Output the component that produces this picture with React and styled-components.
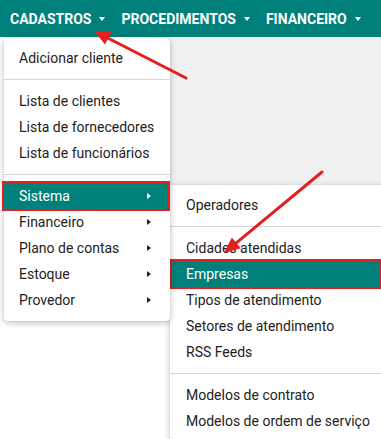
import React from "react";
import styled, { createGlobalStyle } from "styled-components";

const Global = createGlobalStyle`
  html, body {
    margin: 0;
    padding: 0;
    background: #ffffff;
    font-family: Roboto, "Liberation Sans", sans-serif;
  }
`;

const TEAL = "#00807a";
const RED = "#e3201f";

const Page = styled.div`
  position: relative;
  width: 381px;
  height: 439px;
  overflow: hidden;
  background: #fff;
`;

const Navbar = styled.nav`
  display: flex;
  align-items: center;
  height: 37px;
  background: ${TEAL};
  padding-left: 10px;
  gap: 16px;
`;

const NavItem = styled.div`
  position: relative;
  display: flex;
  align-items: center;
  gap: 8px;
  color: #fff;
  font-weight: 700;
  font-size: 14px;
  white-space: nowrap;
`;

const DownCaret = styled.span`
  width: 0;
  height: 0;
  border-left: 3.5px solid transparent;
  border-right: 3.5px solid transparent;
  border-top: 4px solid #fff;
  margin-top: 1px;
`;

const Content = styled.div`
  display: flex;
  padding-left: 150px;
`;

const GrayPanel = styled.div`
  flex: 1;
  height: 160px;
  background: #f0f0f0;
`;

const Menu = styled.div`
  position: absolute;
  top: ${(p) => p.$top}px;
  left: ${(p) => p.$left}px;
  width: ${(p) => p.$width}px;
  background: #fff;
  border-radius: 0 4px 4px 4px;
  box-shadow: 0 2px 6px rgba(0, 0, 0, 0.25), 0 0 1px rgba(0, 0, 0, 0.2);
  padding: 7px 0 8px;
  z-index: ${(p) => p.$z || 10};
`;

const Item = styled.div`
  position: relative;
  display: flex;
  align-items: center;
  justify-content: space-between;
  height: 26px;
  box-sizing: border-box;
  padding: 0 19px 0 ${(p) => p.$pad}px;
  font-size: 14px;
  color: ${(p) => (p.$active ? "#fff" : "#222")};
  background: ${(p) => (p.$active ? TEAL : "transparent")};
  white-space: nowrap;
`;

const Outline = styled.div`
  position: absolute;
  top: -2px;
  bottom: -2px;
  left: ${(p) => p.$left}px;
  right: ${(p) => p.$right}px;
  border: 2.5px solid ${RED};
  pointer-events: none;
`;

const RightCaret = styled.span`
  width: 0;
  height: 0;
  border-top: 3.5px solid transparent;
  border-bottom: 3.5px solid transparent;
  border-left: 4px solid ${(p) => (p.$light ? "#fff" : "#222")};
`;

const Divider = styled.div`
  height: 1px;
  background: #d6d6d6;
  margin: 8px 0;
`;

const Arrows = styled.svg`
  position: absolute;
  inset: 0;
  z-index: 30;
  pointer-events: none;
`;

const mainMenu = [
  ["Adicionar cliente"],
  null,
  ["Lista de clientes"],
  ["Lista de fornecedores"],
  ["Lista de funcionários"],
  null,
  ["Sistema", true, true],
  ["Financeiro", true],
  ["Plano de contas", true],
  ["Estoque", true],
  ["Provedor", true],
];

const subMenu = [
  ["Operadores"],
  null,
  ["Cidades atendidas"],
  ["Empresas", false, true],
  ["Tipos de atendimento"],
  ["Setores de atendimento"],
  ["RSS Feeds"],
  null,
  ["Modelos de contrato"],
  ["Modelos de ordem de serviço"],
];

function MenuList({ items, pad, outlineLeft, outlineRight }) {
  return items.map((it, i) =>
    it === null ? (
      <Divider key={i} />
    ) : (
      <Item key={i} $pad={pad} $active={it[2]}>
        <span>{it[0]}</span>
        {it[1] && <RightCaret $light={it[2]} />}
        {it[2] && <Outline $left={outlineLeft} $right={outlineRight} />}
      </Item>
    )
  );
}

function Arrow({ x1, y1, x2, y2 }) {
  const ang = Math.atan2(y2 - y1, x2 - x1);
  const len = 16;
  const w = 7;
  const bx = x2 - len * Math.cos(ang);
  const by = y2 - len * Math.sin(ang);
  const px = -Math.sin(ang) * w;
  const py = Math.cos(ang) * w;
  return (
    <g>
      <line x1={x1} y1={y1} x2={bx} y2={by} stroke={RED} strokeWidth="3" strokeLinecap="round" />
      <polygon
        points={`${x2},${y2} ${bx + px},${by + py} ${bx - px},${by - py}`}
        fill={RED}
      />
    </g>
  );
}

export default function App() {
  return (
    <Page>
      <Global />
      <Navbar>
        <NavItem>
          CADASTROS <DownCaret />
        </NavItem>
        <NavItem>
          PROCEDIMENTOS <DownCaret />
        </NavItem>
        <NavItem>
          FINANCEIRO <DownCaret />
        </NavItem>
      </Navbar>
      <Content>
        <GrayPanel />
      </Content>

      <Menu $top={38} $left={4} $width={166} $z={12}>
        <MenuList items={mainMenu} pad={15} outlineLeft={-2} outlineRight={0} />
      </Menu>
      <Menu $top={185} $left={170} $width={240} $z={11}>
        <MenuList items={subMenu} pad={16} outlineLeft={-1} outlineRight={29} />
      </Menu>

      <Arrows width="381" height="439">
        <Arrow x1={186} y1={78} x2={94} y2={31} />
        <Arrow x1={322} y1={172} x2={224} y2={253} />
      </Arrows>
    </Page>
  );
}
